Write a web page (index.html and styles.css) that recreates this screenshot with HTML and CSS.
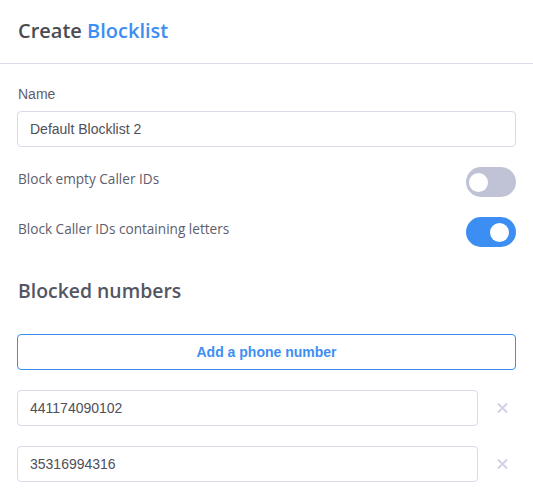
FILE: index.html
```html
<!DOCTYPE html>
<html>
<head>
<meta charset="utf-8">
<link rel="stylesheet" href="styles.css">
</head>
<body>
<header class="header">
  <h1 class="title">Create <span class="accent">Blocklist</span></h1>
</header>
<main class="content">
  <label class="field-label">Name</label>
  <input class="text-input" type="text" value="Default Blocklist 2">

  <div class="toggle-row first">
    <span class="toggle-label">Block empty Caller IDs</span>
    <span class="toggle off"><span class="knob"></span></span>
  </div>
  <div class="toggle-row">
    <span class="toggle-label">Block Caller IDs containing letters</span>
    <span class="toggle on"><span class="knob"></span></span>
  </div>

  <h2 class="section-title">Blocked numbers</h2>

  <button class="add-btn">Add a phone number</button>

  <div class="number-row">
    <input class="text-input" type="text" value="441174090102">
    <span class="remove">
      <svg width="11" height="12" viewBox="0 0 11 12"><path d="M1 1.5 L10 10.5 M10 1.5 L1 10.5" stroke="#d0d1e2" stroke-width="2" fill="none"/></svg>
    </span>
  </div>
  <div class="number-row">
    <input class="text-input" type="text" value="35316994316">
    <span class="remove">
      <svg width="11" height="12" viewBox="0 0 11 12"><path d="M1 1.5 L10 10.5 M10 1.5 L1 10.5" stroke="#d0d1e2" stroke-width="2" fill="none"/></svg>
    </span>
  </div>
</main>
</body>
</html>
```

FILE: styles.css
```css
* { box-sizing: border-box; }
body {
  margin: 0;
  background: #fff;
  font-family: "Open Sans", "Liberation Sans", sans-serif;
}
.header {
  height: 64px;
  border-bottom: 1px solid #dcdce8;
  padding: 17px 18px 0;
}
.title {
  margin: 0;
  font-size: 20px;
  line-height: 27px;
  font-weight: 600;
  color: #4b4b52;
}
.accent { color: #3d8ef2; }
.content {
  padding: 21px 17px 0 17px;
  display: flex;
  flex-direction: column;
}
.field-label {
  font-family: "Liberation Sans", Arial, sans-serif;
  font-size: 14px;
  line-height: 19px;
  color: #5d5e6c;
  padding-left: 1px;
  margin-bottom: 7px;
}
.text-input {
  display: block;
  width: 100%;
  height: 36px;
  border: 1px solid #dadae8;
  border-radius: 4px;
  padding: 0 12px;
  font-family: "Liberation Sans", Arial, sans-serif;
  font-size: 14px;
  color: #4f5058;
  background: #fff;
  outline: none;
}
.toggle-row {
  display: flex;
  justify-content: space-between;
  align-items: flex-start;
  margin-top: 20px;
}
.toggle-label {
  font-size: 13.6px;
  line-height: 24px;
  color: #5d5e6c;
  padding-left: 1px;
}
.toggle {
  width: 50px;
  height: 30px;
  border-radius: 15px;
  display: flex;
  align-items: center;
  padding: 0 3px;
}
.toggle.off { background: #c0c3d5; justify-content: flex-start; }
.toggle.on { background: #3d8ef2; justify-content: flex-end; padding-right: 7px; }
.knob {
  width: 19px;
  height: 19px;
  border-radius: 50%;
  background: #fff;
}
.section-title {
  margin: 30px 0 0 1px;
  font-size: 19.4px;
  line-height: 27px;
  font-weight: 600;
  color: #545663;
}
.add-btn {
  margin-top: 30px;
  height: 36px;
  width: 100%;
  border: 1px solid #3d8ef2;
  border-radius: 4px;
  background: #fff;
  color: #3d8ef2;
  font-family: "Liberation Sans", Arial, sans-serif;
  font-weight: 700;
  font-size: 14px;
}
.number-row {
  display: flex;
  align-items: center;
  margin-top: 20px;
}
.number-row .text-input { flex: 1; }
.remove {
  display: flex;
  margin-left: 19px;
  margin-right: 8px;
}
```
